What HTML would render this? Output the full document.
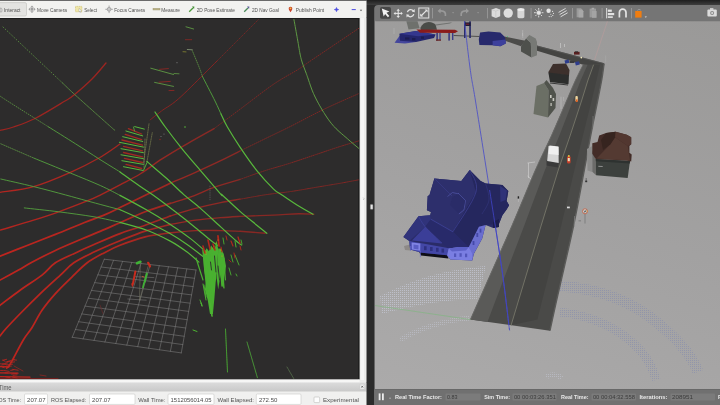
<!DOCTYPE html>
<html lang="en"><head><meta charset="utf-8"><title>RViz and Gazebo</title>
<style>
html,body{margin:0;padding:0;background:#2b2b2b;overflow:hidden}
body{width:720px;height:405px;position:relative;font-family:"Liberation Sans",sans-serif}
#stage{position:absolute;left:0;top:0;width:720px;height:405px;display:block;will-change:transform}
text{font-family:"Liberation Sans",sans-serif}
</style></head><body>
<svg id="stage" width="720" height="405" viewBox="0 0 720 405">
<defs><linearGradient id="tb" x1="0" y1="0" x2="0" y2="1"><stop offset="0" stop-color="#1e1e1e"/><stop offset="1" stop-color="#3e3e3e"/></linearGradient></defs>
<rect x="0" y="0" width="720" height="405" fill="#2b2b2b"/>
<rect x="366" y="0" width="354" height="5" fill="url(#tb)"/>
<g id="rviz-chrome">
<rect x="0" y="0" width="366.3" height="405" fill="#efefee"/>
<rect x="0" y="0" width="366.3" height="0.9" fill="#4a4a4a"/>
<rect x="0" y="0.9" width="366.3" height="16.6" fill="#f2f2f0"/>
<rect x="359" y="18" width="7.3" height="364" fill="#ececeb"/>
<rect x="360.6" y="18" width="3.4" height="362" fill="#f6f6f6"/>
<path d="M363.2 197.6l1 1.2-1 1.2" fill="none" stroke="#999" stroke-width="0.5"/>
</g>
<g id="gazebo-chrome">
<path d="M374.2 405V9Q374.2 5 378.2 5H720V405Z" fill="#757575"/>
<rect x="370.4" y="204.4" width="2.5" height="4.9" rx="0.5" fill="#e6e6e6" stroke="#888" stroke-width="0.4"/>
</g>
<g id="rviz-view">
<rect x="0" y="18" width="359.6" height="361.5" fill="#1a1a1a"/><rect x="0" y="18" width="358.3" height="361.2" fill="#2d2c2c"/>
<rect x="0" y="18" width="359" height="1" fill="#1c1c1c"/>
<clipPath id="cl"><rect x="0" y="19" width="359" height="360"/></clipPath>
<linearGradient id="rg" gradientUnits="userSpaceOnUse" x1="0" y1="0" x2="250" y2="0"><stop offset="0" stop-color="#c0241e"/><stop offset="0.45" stop-color="#b2261f"/><stop offset="0.75" stop-color="#962823"/><stop offset="1" stop-color="#862925"/></linearGradient>
<g clip-path="url(#cl)" stroke-linecap="round">
<path d="M104.3 259.2L72.2 337.3M104.3 259.2L196.0 270.0M113.5 260.3L83.1 338.9M101.1 267.0L194.5 278.3M122.6 261.4L94.0 340.4M97.9 274.8L193.1 286.6M131.8 262.4L104.9 342.0M94.7 282.6L191.6 294.9M141.0 263.5L115.8 343.5M91.5 290.4L190.1 303.2M150.2 264.6L126.8 345.1M88.2 298.2L188.7 311.4M159.3 265.7L137.7 346.7M85.0 306.1L187.2 319.7M168.5 266.8L148.6 348.2M81.8 313.9L185.7 328.0M177.7 267.8L159.5 349.8M78.6 321.7L184.2 336.3M186.8 268.9L170.4 351.3M75.4 329.5L182.8 344.6M196.0 270.0L181.3 352.9M72.2 337.3L181.3 352.9" fill="none" stroke="#808080" stroke-width="0.55"/>
<path d="M106.0 63.0C103.7 65.7 97.3 73.7 92.0 79.0C86.7 84.3 78.5 91.3 74.0 95.0C69.5 98.7 71.5 97.1 65.0 101.0C58.5 104.9 43.6 114.2 35.0 118.5C26.4 122.8 19.2 125.0 13.4 127.0C7.6 129.0 2.2 129.8 0.0 130.4" fill="none" stroke="#9c2521" stroke-width="1.3"/>
<path d="M120.0 144.0C116.5 146.3 107.2 153.3 99.0 158.0C90.8 162.7 81.4 167.5 70.5 172.3C59.6 177.1 45.4 183.2 33.6 186.6C21.9 189.9 5.6 191.4 0.0 192.4" fill="none" stroke="url(#rg)" stroke-width="1.3" stroke-opacity="0.9"/>
<path d="M0.0 230.2C5.6 228.5 23.8 223.3 33.6 220.2C43.4 217.1 49.8 215.0 58.7 211.8C67.6 208.6 80.2 203.7 87.2 200.9C94.2 198.1 95.2 197.5 100.7 194.8C106.2 192.1 113.4 188.4 120.0 184.9C126.6 181.4 133.1 178.3 140.1 174.0C147.1 169.7 154.2 163.9 162.0 158.9C169.8 153.9 178.4 148.8 187.1 143.8C195.8 138.8 209.5 131.2 214.0 128.7" fill="none" stroke="url(#rg)" stroke-width="1.4" stroke-opacity="0.92"/>
<path d="M214.0 128.7C218.3 125.5 230.1 116.7 240.0 109.3C249.9 101.9 263.8 90.9 273.6 84.2C283.4 77.5 292.3 73.2 298.7 69.1C305.1 65.0 301.9 66.7 312.1 59.8C322.3 52.9 352.0 32.9 360.0 27.5" fill="none" stroke="#842724" stroke-width="0.9" stroke-dasharray="0.9 1.5"/>
<path d="M0.0 256.2C4.2 254.5 16.0 249.8 25.2 246.2C34.4 242.6 45.6 238.3 55.4 234.4C65.2 230.5 75.8 225.9 83.9 222.7C92.0 219.5 98.0 217.6 104.0 215.1C110.0 212.6 112.9 211.0 120.0 207.6C127.1 204.2 138.4 198.7 146.8 194.6C155.2 190.5 166.4 185.1 170.3 183.2" fill="none" stroke="url(#rg)" stroke-width="1.7"/>
<path d="M170.3 183.2C174.5 181.4 187.1 176.1 195.5 172.3C203.9 168.5 213.3 164.2 220.7 160.6C228.1 157.0 236.8 152.6 240.0 151.0" fill="none" stroke="url(#rg)" stroke-width="1.35"/>
<path d="M240.0 151.0C244.2 148.9 256.8 142.8 265.2 138.7C273.6 134.6 280.5 131.4 290.3 126.5C300.1 121.6 312.7 114.7 323.9 109.3C335.1 103.9 351.4 96.9 357.4 94.2C363.4 91.5 359.6 93.2 360.0 93.0" fill="none" stroke="#842724" stroke-width="0.9" stroke-dasharray="0.9 1.3"/>
<path d="M0.0 280.1C3.1 278.4 13.3 272.9 18.5 270.0C23.7 267.1 24.9 266.1 31.0 262.8C37.1 259.5 47.1 254.3 55.4 250.4C63.6 246.5 73.0 242.7 80.5 239.5C88.0 236.3 94.1 233.9 100.7 231.1C107.3 228.3 112.6 225.9 120.0 222.7C127.4 219.5 136.8 215.0 145.2 211.8C153.6 208.6 166.1 204.8 170.3 203.4" fill="none" stroke="url(#rg)" stroke-width="1.7"/>
<path d="M170.3 203.4C174.2 202.1 186.5 198.5 193.8 195.8C201.1 193.1 206.3 190.1 214.0 187.4C221.7 184.7 235.7 180.7 240.0 179.4" fill="none" stroke="url(#rg)" stroke-width="1.35"/>
<path d="M240.0 179.4C244.2 177.9 256.8 173.3 265.2 170.6C273.6 167.9 281.9 165.8 290.3 163.1C298.7 160.4 307.1 157.5 315.5 154.7C323.9 151.9 333.7 148.5 340.7 146.3C347.7 144.1 354.2 142.3 357.4 141.3C360.6 140.3 359.6 140.6 360.0 140.5" fill="none" stroke="#842724" stroke-width="1.0" stroke-dasharray="1.1 1.1"/>
<path d="M0.0 305.3C3.4 302.8 13.1 295.2 20.1 290.2C27.1 285.2 36.1 279.7 42.0 275.1C47.9 270.5 49.8 266.5 55.4 262.8C61.0 259.1 69.1 256.0 75.5 252.9C81.9 249.8 86.6 247.7 94.0 244.5C101.4 241.3 111.5 236.8 120.0 233.6C128.5 230.4 136.8 228.1 145.2 225.2C153.6 222.3 166.1 217.5 170.3 216.0" fill="none" stroke="url(#rg)" stroke-width="1.7"/>
<path d="M170.3 216.0C174.5 214.7 187.1 210.6 195.5 208.4C203.9 206.2 213.3 204.1 220.7 202.6C228.1 201.1 236.8 199.8 240.0 199.2" fill="none" stroke="url(#rg)" stroke-width="1.35"/>
<path d="M240.0 199.2C244.2 198.5 256.8 196.1 265.2 194.8C273.6 193.5 281.9 192.8 290.3 191.6C298.7 190.4 307.1 188.8 315.5 187.4C323.9 186.0 333.6 184.4 340.7 183.2C347.8 181.9 355.4 180.4 358.3 179.9" fill="none" stroke="#842724" stroke-width="1.0" stroke-dasharray="1.3 0.9"/>
<path d="M0.0 336.0C1.1 334.6 3.1 331.8 6.7 327.8C10.3 323.8 16.2 317.7 21.8 312.0C27.4 306.3 33.9 299.8 40.3 293.6C46.7 287.5 54.8 280.2 60.4 275.1C66.0 270.0 68.2 266.7 73.8 262.8C79.4 258.9 88.1 254.9 94.0 252.0C99.9 249.1 104.7 247.2 109.0 245.3C113.3 243.4 114.0 243.1 120.0 240.7C126.0 238.3 136.8 233.8 145.2 231.1C153.6 228.4 166.1 225.5 170.3 224.4" fill="none" stroke="url(#rg)" stroke-width="1.7"/>
<path d="M170.3 224.4C174.5 223.7 187.1 221.3 195.5 220.2C203.9 219.1 213.3 218.3 220.7 217.7C228.1 217.1 236.8 216.6 240.0 216.4" fill="none" stroke="url(#rg)" stroke-width="1.35"/>
<path d="M240.0 216.4C245.6 216.2 263.8 215.5 273.6 215.1C283.4 214.7 292.0 213.9 298.7 213.8C305.4 213.7 311.3 214.2 313.8 214.3" fill="none" stroke="#872824" stroke-width="1.4"/>
<path d="M6.7 368.0C7.2 367.4 7.2 369.1 10.0 364.4C12.8 359.7 19.7 346.1 23.3 340.0C26.9 333.9 28.8 332.8 31.9 327.8C35.0 322.9 38.1 316.0 42.0 310.3C45.9 304.6 50.4 299.2 55.4 293.6C60.4 288.0 66.8 281.9 72.1 276.8C77.4 271.7 81.9 266.8 87.2 262.8C92.5 258.8 98.5 255.8 104.0 252.9C109.5 250.0 113.1 248.0 120.0 245.3C126.9 242.6 136.8 239.0 145.2 236.9C153.6 234.8 166.1 233.5 170.3 232.8" fill="none" stroke="url(#rg)" stroke-width="1.7"/>
<path d="M170.3 232.8C174.5 232.4 187.1 231.0 195.5 230.6C203.9 230.2 213.3 230.5 220.7 230.6C228.1 230.7 236.8 231.2 240.0 231.3" fill="none" stroke="url(#rg)" stroke-width="1.35"/>
<path d="M240.0 231.3L265.2 233.3" fill="none" stroke="#872824" stroke-width="1.4"/>
<path d="M260.0 18.0L217.0 61.0" fill="none" stroke="#842724" stroke-width="0.8" stroke-dasharray="0.8 1.6"/>
<path d="M217.0 61.0C210.8 67.1 189.2 89.2 180.0 97.5C170.8 105.8 166.5 107.2 161.5 111.0C156.5 114.8 151.9 118.5 150.0 120.0" fill="none" stroke="#8c2422" stroke-width="0.95" stroke-dasharray="1.3 0.7"/>
<path d="M3.3 360.1l3.3 -0.8M0.9 366.0l5.6 0.7M10.7 362.4l3.9 -0.5M2.4 360.1l2.5 1.0M11.6 374.1l5.1 -0.7M4.3 370.5l4.8 0.9M12.3 359.7l4.2 0.4M7.1 361.6l3.6 -1.0M13.1 375.3l4.0 -0.5M12.7 369.4l5.5 0.8M7.1 366.3l4.2 -0.2M2.3 364.1l5.2 -1.1M0.6 370.5l2.8 0.1M6.6 364.9l6.0 -0.7M5.8 362.1l4.3 -0.5M5.0 372.9l2.9 0.1M12.7 360.0l1.8 -0.7M10.7 370.3l2.6 -0.4M2.5 367.2l1.7 0.5M12.5 377.1l4.8 1.1M0.3 363.8l5.8 0.7M5.7 376.9l4.3 0.8" fill="none" stroke="url(#rg)" stroke-width="1.0" stroke-opacity="0.8"/>
<line x1="0.0" y1="366.7" x2="9.0" y2="367.0" stroke="url(#rg)" stroke-width="1.2"/>
<line x1="0.0" y1="372.8" x2="18.0" y2="373.2" stroke="url(#rg)" stroke-width="1.2"/>
<line x1="0.0" y1="376.7" x2="30.0" y2="377.2" stroke="url(#rg)" stroke-width="1.2"/>
<line x1="0.0" y1="378.7" x2="58.0" y2="378.7" stroke="#8a1a16" stroke-width="0.9"/>
<line x1="14.0" y1="366.0" x2="23.0" y2="371.0" stroke="#842724" stroke-width="0.9"/>
<line x1="40.0" y1="375.0" x2="46.0" y2="376.0" stroke="#842724" stroke-width="0.9"/>
<path d="M3.0 27.0L62.0 82.5" fill="none" stroke="#5f9a44" stroke-width="0.8" stroke-dasharray="0.8 2.2"/>
<path d="M62.0 82.5C64.2 84.5 66.8 87.3 75.0 94.8C83.2 102.2 104.5 121.2 111.0 127.0C117.5 132.8 113.5 129.1 114.0 129.5" fill="none" stroke="#5f9a44" stroke-width="0.8" stroke-dasharray="1.1 0.9"/>
<path d="M0.0 96.0C1.2 96.8 -0.6 95.8 7.5 101.0C15.6 106.2 41.8 122.7 48.7 127.0" fill="none" stroke="#5f9a44" stroke-width="0.8" stroke-dasharray="0.8 1.6"/>
<path d="M48.7 127.0C53.2 129.8 67.1 138.5 75.5 143.8C83.9 149.1 91.6 154.2 99.0 158.9C106.4 163.6 116.5 169.7 120.0 171.9" fill="none" stroke="#55a23e" stroke-width="0.9"/>
<path d="M120.0 171.9C122.8 173.9 131.4 180.2 136.8 184.0C142.2 187.8 145.9 190.0 152.3 194.6C158.7 199.2 168.2 206.3 175.4 211.8C182.6 217.3 189.6 222.9 195.5 227.7C201.4 232.4 207.0 237.4 210.6 240.3C214.2 243.2 216.2 244.5 217.3 245.3" fill="none" stroke="#58b83c" stroke-width="1.2"/>
<path d="M0.8 143.8L33.6 158.0" fill="none" stroke="#5f9a44" stroke-width="0.8" stroke-dasharray="0.8 1.2"/>
<path d="M33.6 158.0C39.8 160.5 59.3 168.5 70.5 173.1C81.7 177.7 92.5 182.0 100.7 185.7C109.0 189.4 116.8 193.8 120.0 195.4" fill="none" stroke="#55a23e" stroke-width="0.9"/>
<path d="M120.0 195.4C124.5 197.8 138.4 205.3 146.8 210.1C155.2 214.9 163.0 219.7 170.3 224.4C177.6 229.2 184.3 233.8 190.5 238.6C196.7 243.3 204.4 250.5 207.2 252.9" fill="none" stroke="#58b83c" stroke-width="1.2"/>
<path d="M0.8 179.0C6.3 180.3 22.8 183.9 33.6 186.6C44.4 189.2 56.5 192.5 65.4 194.9C74.3 197.3 78.1 198.4 87.2 200.9C96.3 203.4 114.5 208.2 120.0 209.7" fill="none" stroke="#55a23e" stroke-width="0.9"/>
<path d="M120.0 209.7C124.5 211.7 138.7 218.0 146.8 221.8C154.9 225.7 162.0 229.0 168.7 232.8C175.4 236.6 181.2 240.4 187.1 244.5C193.0 248.6 201.1 255.0 203.9 257.1" fill="none" stroke="#58b83c" stroke-width="1.2"/>
<path d="M24.3 207.9C30.0 208.6 47.1 210.3 58.7 211.8C70.3 213.3 83.8 215.1 94.0 216.8C104.2 218.6 115.7 221.4 120.0 222.3" fill="none" stroke="#55a23e" stroke-width="0.9"/>
<path d="M120.0 222.3C124.5 223.6 138.4 227.1 146.8 230.2C155.2 233.3 163.6 237.5 170.3 241.1C177.0 244.7 182.3 248.5 187.1 252.0C191.9 255.5 196.9 260.4 198.9 262.1" fill="none" stroke="#58b83c" stroke-width="1.2"/>
<path d="M293.8 18.8C294.5 22.6 296.8 35.3 298.0 42.0C299.2 48.7 299.7 53.4 301.2 59.0C302.7 64.6 305.0 69.9 307.1 75.8C309.2 81.7 311.0 88.0 313.8 94.2C316.6 100.4 320.5 107.3 323.9 112.7C327.3 118.1 330.1 122.2 334.0 126.5C337.9 130.8 343.3 135.1 347.4 138.7C351.4 142.3 356.2 146.2 358.3 148.0C360.4 149.8 359.7 149.2 360.0 149.5" fill="none" stroke="#5f9a44" stroke-width="1.0" stroke-dasharray="1.8 0.6"/>
<path d="M192.3 50.7C193.5 53.5 197.6 63.4 199.3 67.7C201.0 72.0 201.9 75.0 202.4 76.4" fill="none" stroke="#5f9a44" stroke-width="0.8" stroke-dasharray="0.8 1.3"/>
<path d="M202.4 76.4C204.5 80.5 211.9 94.7 215.0 101.0C218.1 107.3 220.0 111.8 221.0 114.0" fill="none" stroke="#4f9a3c" stroke-width="1.0"/>
<path d="M221.0 114.0C222.1 116.2 224.2 121.5 227.4 127.0C230.6 132.5 235.1 139.8 240.0 147.1C244.9 154.4 251.2 163.6 256.8 170.6C262.4 177.6 269.4 185.0 273.6 189.1C277.8 193.2 278.1 192.3 282.0 195.0C285.9 197.7 291.8 201.8 297.0 205.0C302.2 208.2 310.3 212.8 313.0 214.3" fill="none" stroke="#58b83c" stroke-width="1.2"/>
<path d="M155.0 112.0C156.7 114.5 160.8 120.9 165.3 127.0C169.8 133.1 176.2 141.5 182.1 148.8C188.0 156.1 194.1 163.1 200.5 170.6C206.9 178.1 217.1 190.0 220.7 194.1C224.3 198.2 219.1 192.1 222.3 195.0C225.5 197.9 234.2 206.4 240.0 211.4C245.8 216.4 252.3 221.5 256.8 225.2C261.3 228.8 265.1 232.0 266.8 233.3" fill="none" stroke="#58b83c" stroke-width="1.2"/>
<path d="M146.8 161.4C149.9 164.1 159.1 171.8 165.3 177.3C171.5 182.8 177.9 189.4 183.8 194.6C189.7 199.8 194.3 203.0 200.5 208.4C206.7 213.8 214.5 221.3 220.7 226.9C226.8 232.5 233.9 239.0 237.4 242.0C240.9 245.0 241.0 244.5 241.7 245.0" fill="none" stroke="#58b83c" stroke-width="1.2"/>
<line x1="186.0" y1="26.8" x2="193.6" y2="29.0" stroke="#5f9a44" stroke-width="0.9"/>
<line x1="185.4" y1="39.7" x2="191.7" y2="39.7" stroke="#842724" stroke-width="0.9"/>
<line x1="187.3" y1="49.5" x2="192.3" y2="49.8" stroke="#7f8f70" stroke-width="0.9"/>
<line x1="183.0" y1="51.7" x2="186.0" y2="51.9" stroke="#7d7d30" stroke-width="0.9"/>
<circle cx="177" cy="62.7" r="0.6" fill="#777"/>
<circle cx="185" cy="127" r="0.8" fill="#58b83c"/>
<line x1="150.8" y1="68.2" x2="173.5" y2="74.5" stroke="#5f9a44" stroke-width="0.9"/>
<line x1="174.0" y1="73.5" x2="179.0" y2="73.8" stroke="#5f9a44" stroke-width="0.8"/>
<line x1="159.6" y1="69.3" x2="168.4" y2="68.6" stroke="#842724" stroke-width="1.0"/>
<line x1="154.6" y1="82.4" x2="173.5" y2="86.4" stroke="#5f9a44" stroke-width="0.9"/>
<line x1="159.0" y1="82.2" x2="170.3" y2="81.4" stroke="#842724" stroke-width="1.0"/>
<line x1="169.0" y1="90.6" x2="174.0" y2="90.4" stroke="#842724" stroke-width="1.0"/>
<line x1="134.7" y1="126.6" x2="144.3" y2="129.1" stroke="#58b83c" stroke-width="1.0"/>
<line x1="128.4" y1="128.7" x2="141.7" y2="134.0" stroke="#a02a22" stroke-width="1.3"/>
<line x1="125.9" y1="131.0" x2="142.7" y2="135.9" stroke="#58b83c" stroke-width="1.0"/>
<line x1="125.2" y1="134.4" x2="141.7" y2="139.6" stroke="#a02a22" stroke-width="1.3"/>
<line x1="122.7" y1="136.7" x2="142.7" y2="141.5" stroke="#58b83c" stroke-width="1.0"/>
<line x1="121.9" y1="140.0" x2="142.5" y2="145.2" stroke="#a02a22" stroke-width="1.3"/>
<line x1="119.4" y1="142.3" x2="143.5" y2="147.1" stroke="#58b83c" stroke-width="1.0"/>
<line x1="123.5" y1="146.4" x2="142.5" y2="150.8" stroke="#a02a22" stroke-width="1.3"/>
<line x1="121.0" y1="148.7" x2="143.5" y2="152.7" stroke="#58b83c" stroke-width="1.0"/>
<line x1="123.5" y1="152.5" x2="142.5" y2="156.8" stroke="#a02a22" stroke-width="1.3"/>
<line x1="121.0" y1="154.8" x2="143.5" y2="158.7" stroke="#58b83c" stroke-width="1.0"/>
<line x1="124.4" y1="158.4" x2="142.5" y2="162.5" stroke="#a02a22" stroke-width="1.3"/>
<line x1="121.9" y1="160.7" x2="143.5" y2="164.4" stroke="#58b83c" stroke-width="1.0"/>
<line x1="126.0" y1="164.4" x2="141.7" y2="168.5" stroke="#a02a22" stroke-width="1.3"/>
<line x1="123.5" y1="166.7" x2="142.7" y2="170.4" stroke="#58b83c" stroke-width="1.0"/>
<line x1="149.0" y1="123.8" x2="143.5" y2="163.0" stroke="#747a4c" stroke-width="0.75" stroke-dasharray="0.7 1.0"/>
<line x1="152.3" y1="132.7" x2="147.0" y2="161.5" stroke="#747a4c" stroke-width="0.75" stroke-dasharray="0.7 1.0"/>
<line x1="145.0" y1="139.0" x2="144.0" y2="168.0" stroke="#747a4c" stroke-width="0.75" stroke-dasharray="0.7 1.0"/>
<line x1="143.5" y1="170.4" x2="147.5" y2="161.5" stroke="#58b83c" stroke-width="0.9"/>
<line x1="133.5" y1="127.0" x2="134.5" y2="131.0" stroke="#58b83c" stroke-width="0.8"/>
<circle cx="161" cy="136.5" r="0.6" fill="#777"/><circle cx="164" cy="134" r="0.6" fill="#777"/><circle cx="160" cy="139.5" r="0.7" fill="#8e2622"/>
<line x1="210.0" y1="186.0" x2="210.0" y2="201.0" stroke="#777" stroke-width="0.5" stroke-dasharray="0.6 1.6"/>
<polygon points="203.3,253.4 206.7,248.3 208.9,251.2 211.1,245.4 214.4,249.9 216.7,240.6 218.2,249.4 217.3,269.4 215.6,282.8 214.4,298.3 212.9,313.9 210.0,313.9 207.8,300.6 204.9,289.4 206.2,281.7 204.0,269.4" fill="#49b030"/>
<polygon points="218.2,249.4 221.1,248.3 223.8,253.9 226.0,266.1 224.4,277.2 223.6,288.3 221.8,285.0 221.1,273.9 219.6,280.6 218.2,289.4 216.7,278.3 217.3,269.4" fill="#49b030"/>
<line x1="196.0" y1="258.0" x2="203.0" y2="280.0" stroke="#49b030" stroke-width="1.2"/>
<line x1="203.0" y1="250.0" x2="207.0" y2="290.0" stroke="#49b030" stroke-width="1.6"/>
<line x1="206.0" y1="262.0" x2="210.0" y2="300.0" stroke="#49b030" stroke-width="2.4"/>
<line x1="209.0" y1="280.0" x2="212.0" y2="311.0" stroke="#49b030" stroke-width="2.0"/>
<line x1="211.0" y1="250.0" x2="214.0" y2="285.0" stroke="#49b030" stroke-width="1.4"/>
<line x1="219.0" y1="249.0" x2="222.0" y2="286.0" stroke="#49b030" stroke-width="1.4"/>
<line x1="222.0" y1="262.0" x2="224.0" y2="288.0" stroke="#49b030" stroke-width="1.2"/>
<line x1="224.0" y1="258.0" x2="225.5" y2="280.0" stroke="#49b030" stroke-width="1.0"/>
<line x1="203.0" y1="284.0" x2="206.0" y2="300.0" stroke="#49b030" stroke-width="1.0"/>
<line x1="200.0" y1="300.0" x2="202.0" y2="305.0" stroke="#49b030" stroke-width="1.0"/>
<line x1="231.0" y1="255.0" x2="233.0" y2="262.0" stroke="#49b030" stroke-width="0.9"/>
<line x1="235.0" y1="255.0" x2="239.0" y2="265.0" stroke="#49b030" stroke-width="0.9"/>
<line x1="229.0" y1="268.0" x2="231.0" y2="275.0" stroke="#49b030" stroke-width="0.9"/>
<line x1="223.0" y1="238.0" x2="224.0" y2="244.0" stroke="#49b030" stroke-width="0.9"/>
<line x1="235.0" y1="241.0" x2="236.0" y2="247.0" stroke="#49b030" stroke-width="1.0"/>
<line x1="241.0" y1="240.0" x2="242.0" y2="244.0" stroke="#49b030" stroke-width="0.9"/>
<line x1="236.0" y1="274.0" x2="237.0" y2="276.0" stroke="#49b030" stroke-width="0.9"/>
<line x1="201.0" y1="303.0" x2="202.0" y2="306.0" stroke="#49b030" stroke-width="1.0"/>
<line x1="204.0" y1="285.0" x2="206.0" y2="297.0" stroke="#49b030" stroke-width="0.9"/>
<line x1="214.5" y1="256.0" x2="216.0" y2="272.0" stroke="#2d2c2c" stroke-width="0.9"/>
<line x1="218.0" y1="266.0" x2="219.5" y2="280.0" stroke="#2d2c2c" stroke-width="0.9"/>
<line x1="210.5" y1="262.0" x2="211.5" y2="270.0" stroke="#2d2c2c" stroke-width="0.9"/>
<line x1="203.0" y1="246.0" x2="205.0" y2="253.0" stroke="#b0281c" stroke-width="1.6"/>
<line x1="208.0" y1="240.0" x2="210.0" y2="249.0" stroke="#b0281c" stroke-width="1.6"/>
<line x1="213.0" y1="244.0" x2="215.0" y2="250.0" stroke="#b0281c" stroke-width="1.4"/>
<line x1="218.0" y1="236.0" x2="219.0" y2="246.0" stroke="#b0281c" stroke-width="1.8"/>
<line x1="221.0" y1="247.0" x2="222.0" y2="252.0" stroke="#b0281c" stroke-width="1.2"/>
<line x1="226.0" y1="236.0" x2="227.0" y2="240.0" stroke="#b0281c" stroke-width="1.0"/>
<line x1="231.0" y1="241.0" x2="233.0" y2="246.0" stroke="#b0281c" stroke-width="1.2"/>
<line x1="238.0" y1="237.0" x2="240.0" y2="243.0" stroke="#b0281c" stroke-width="1.3"/>
<line x1="240.0" y1="246.0" x2="241.0" y2="250.0" stroke="#b0281c" stroke-width="1.0"/>
<line x1="234.0" y1="253.0" x2="235.0" y2="258.0" stroke="#b0281c" stroke-width="1.0"/>
<line x1="229.0" y1="260.0" x2="231.0" y2="262.0" stroke="#b0281c" stroke-width="0.9"/>
<circle cx="206" cy="252" r="0.5" fill="#e89a10"/>
<circle cx="213" cy="248" r="0.5" fill="#e89a10"/>
<circle cx="216" cy="243" r="0.5" fill="#e89a10"/>
<circle cx="218" cy="240" r="0.5" fill="#e89a10"/>
<circle cx="221" cy="250" r="0.5" fill="#e89a10"/>
<circle cx="222" cy="256" r="0.5" fill="#e89a10"/>
<circle cx="206" cy="254" r="0.5" fill="#e89a10"/>
<circle cx="214" cy="246" r="0.5" fill="#e89a10"/>
<line x1="225.5" y1="329.0" x2="227.5" y2="372.0" stroke="#48a832" stroke-width="0.9" stroke-dasharray="1.4 0.5"/>
<line x1="247.0" y1="342.0" x2="257.5" y2="378.0" stroke="#4a9a38" stroke-width="0.9" stroke-dasharray="1.2 0.6"/>
<line x1="287.0" y1="367.0" x2="294.0" y2="379.0" stroke="#5b7a50" stroke-width="0.7" stroke-dasharray="0.9 0.8"/>
<line x1="193.0" y1="330.0" x2="197.0" y2="331.5" stroke="#4db432" stroke-width="1.0"/>
<line x1="201.0" y1="303.0" x2="202.0" y2="306.0" stroke="#4db432" stroke-width="1.0"/>
<path d="M210.0 303.0C210.2 303.8 210.7 305.8 211.0 308.0C211.3 310.2 211.8 314.7 212.0 316.0" fill="none" stroke="#4db432" stroke-width="1.6"/>
<line x1="140.3" y1="264.3" x2="139.5" y2="300.3" stroke="#6e6e5e" stroke-width="0.6"/>
<line x1="147.9" y1="266.8" x2="139.8" y2="300.3" stroke="#6e6e5e" stroke-width="0.6"/>
<line x1="134.5" y1="276.6" x2="153.8" y2="277.6" stroke="#8a8a8a" stroke-width="0.45"/>
<line x1="127.8" y1="299.0" x2="146.2" y2="300.2" stroke="#8a8a8a" stroke-width="0.45"/>
<line x1="135.4" y1="271.4" x2="132.8" y2="284.4" stroke="#c82c1e" stroke-width="2.0"/>
<line x1="132.0" y1="284.0" x2="132.6" y2="286.0" stroke="#c82c1e" stroke-width="1.4"/>
<line x1="137.0" y1="263.2" x2="140.4" y2="261.8" stroke="#3fb235" stroke-width="2.6"/>
<line x1="148.2" y1="262.8" x2="150.0" y2="266.4" stroke="#c82c1e" stroke-width="2.2"/>
<line x1="146.8" y1="273.6" x2="144.6" y2="282.0" stroke="#3fb235" stroke-width="2.0"/>
<line x1="144.0" y1="283.0" x2="143.0" y2="287.4" stroke="#3fb235" stroke-width="1.7"/>
<line x1="142.2" y1="276.5" x2="144.0" y2="277.0" stroke="#d86030" stroke-width="0.8"/>
<line x1="100.0" y1="305.0" x2="103.0" y2="313.6" stroke="#7a2a2a" stroke-width="0.5" stroke-dasharray="0.6 0.6"/>
</g></g>
<g id="gazebo-view">
<defs><linearGradient id="gnd" gradientUnits="userSpaceOnUse" x1="720" y1="21" x2="571" y2="456"><stop offset="0" stop-color="#9a9998"/><stop offset="0.5" stop-color="#a2a1a1"/><stop offset="1" stop-color="#abaaaa"/></linearGradient>
<clipPath id="cr"><rect x="375" y="21" width="345" height="368"/></clipPath></defs>
<rect x="375" y="20.6" width="345" height="368.4" fill="url(#gnd)"/>
<g clip-path="url(#cr)">
<defs><pattern id="dt1" width="2" height="2" patternUnits="userSpaceOnUse"><rect x="0" y="0" width="1" height="1" fill="#c6c9d8"/></pattern><pattern id="dt2" width="2" height="2" patternUnits="userSpaceOnUse"><rect x="0" y="0" width="1" height="1" fill="#8088ae"/></pattern></defs>
<path d="M380 296Q430 270 486 266L478 299Q430 300 382 314Z" fill="url(#dt1)" opacity="0.7"/>
<path d="M400 340Q430 322 470 318" fill="none" stroke="url(#dt1)" stroke-width="5" opacity="0.5"/>
<path d="M560 286Q620 290 660 325Q690 350 698 372" fill="none" stroke="url(#dt2)" stroke-width="11" opacity="0.55"/>
<path d="M560 312Q610 318 640 350Q652 364 656 380" fill="none" stroke="url(#dt2)" stroke-width="9" opacity="0.55"/>
<path d="M546 377Q553 372 562 378" fill="none" stroke="url(#dt1)" stroke-width="5" opacity="0.5"/>
<polygon points="453.6,34.9 479.4,35.9 479.4,37.1 453.6,36.1" fill="#4f4f4d"/>
<polygon points="504.4,36.5 525.3,40.7 521.0,46.2 505.0,40.7" fill="#4c4c4a"/>
<polygon points="537.0,45.6 604.4,63.3 604.0,66.0 583.2,64.7 537.0,50.8" fill="#444442"/>
<line x1="537.0" y1="46.1" x2="604.0" y2="63.7" stroke="#5c5c5a" stroke-width="0.6"/>
<polygon points="583.2,64.7 575.6,80.0 566.5,101.0 551.3,136.0 535.4,170.0 511.8,226.0 470.4,319.6 550.0,330.7 556.0,303.0 573.5,226.0 584.3,170.0 590.6,136.0 597.6,101.0 601.7,80.0 604.0,64.0" fill="#4a4a48"/>
<polygon points="583.2,64.7 575.6,80.0 566.5,101.0 551.3,136.0 535.4,170.0 511.8,226.0 470.4,319.6 487.5,322.0 494.6,303.0 524.1,226.0 545.0,170.0 559.2,136.0 572.8,101.0 580.8,80.0 587.6,64.7" fill="#5a5a58"/>
<path d="M583.2 64.7C581.9 67.2 578.4 74.0 575.6 80.0C572.8 86.0 570.5 91.7 566.5 101.0C562.5 110.3 556.5 124.5 551.3 136.0C546.1 147.5 542.0 155.0 535.4 170.0C528.8 185.0 522.6 201.1 511.8 226.0C501.0 250.9 477.3 304.0 470.4 319.6" fill="none" stroke="#6a6a68" stroke-width="1.0"/>
<polygon points="593.6,64.7 588.0,80.0 581.5,101.0 570.0,136.0 558.3,170.0 541.0,226.0 511.1,325.2 537.4,319.6 541.5,303.0 561.1,226.0 574.4,170.0 582.8,136.0 591.5,101.0 596.5,80.0 600.0,64.7" fill="#434341"/>
<path d="M604.0 64.0C603.6 66.7 602.8 73.8 601.7 80.0C600.6 86.2 599.5 91.7 597.6 101.0C595.8 110.3 592.8 124.5 590.6 136.0C588.4 147.5 587.1 155.0 584.3 170.0C581.4 185.0 578.2 203.8 573.5 226.0C568.8 248.2 559.9 285.6 556.0 303.0C552.1 320.4 551.0 326.1 550.0 330.7" fill="none" stroke="#5a5a58" stroke-width="1.4"/>
<path d="M593.6 64.7L588.0 80.0L581.5 101.0L570.0 136.0L558.3 170.0L541.0 226.0L511.1 325.2" fill="none" stroke="#77776a" stroke-width="0.9"/>
<line x1="394.0" y1="28.0" x2="394.0" y2="34.0" stroke="#c4c4c4" stroke-width="0.35"/>
<polygon points="406.4,21.3 417.5,21.3 419.6,28.2 408.5,29.6" fill="#6e706c"/>
<path d="M420.3 28Q423 22 428.6 22Q434 22.5 435.6 24.7L437 29.8L421 30.2Z" fill="#4a4c48"/>
<polygon points="435.6,24.4 452.2,22.3 450.0,23.6 436.0,25.6" fill="#707270"/>
<polygon points="394.6,42.8 399.4,36.0 416.0,42.0 405.0,43.4" fill="#34379c" opacity="0.85"/>
<polygon points="399.4,33.8 416.0,31.0 435.6,34.4 434.0,37.9 416.0,42.0 400.0,40.7" fill="#24266c"/>
<polygon points="399.4,33.8 416.0,31.0 435.6,34.4 418.0,36.2" fill="#34378e"/>
<rect x="405" y="37.4" width="4.5" height="2.2" fill="#1c1d50"/><rect x="412" y="38" width="3.4" height="2.4" fill="#1c1d50"/><rect x="421" y="36.6" width="3" height="2.2" fill="#1c1d50"/>
<rect x="436.4" y="33" width="1.4" height="7.6" fill="#2c2e7a"/><rect x="439.4" y="33" width="1.2" height="7" fill="#3a3c8a"/><rect x="448.4" y="33" width="1.4" height="7.6" fill="#2c2e7a"/><rect x="452" y="33" width="1.4" height="7" fill="#3a3c8a"/><rect x="436" y="39.4" width="5" height="1.4" fill="#6a2a2a"/>
<polygon points="416.4,29.4 455.0,29.8 458.0,31.2 455.0,33.0 420.0,32.8" fill="#8a1b1b"/>
<rect x="464" y="21.2" width="1.5" height="16.8" fill="#2a2c6a"/><rect x="469.2" y="21.2" width="1.7" height="16.8" fill="#2a2c6a"/><rect x="464.6" y="22.4" width="6" height="3.6" fill="#1c1c34"/><rect x="466" y="23.6" width="3" height="1.2" fill="#7a2030"/>
<path d="M464.4 21.2C465.4 29.4 468.5 57.3 470.4 70.6C472.2 83.9 472.3 81.1 475.5 101.0C478.7 120.9 485.2 161.8 489.6 190.0C494.0 218.2 498.8 247.5 502.0 270.0C505.2 292.5 507.7 315.5 508.9 325.2C510.1 334.9 509.3 327.5 509.4 328.0" fill="none" stroke="#4a4ec8" stroke-width="0.85"/>
<polygon points="480.1,32.4 488.5,31.4 500.3,32.4 505.1,37.2 505.8,43.5 500.3,46.2 492.6,45.3 479.4,44.9 478.8,39.3" fill="#27296c"/>
<polygon points="492.6,41.0 505.5,39.5 505.8,43.5 500.3,46.2 492.6,45.3" fill="#3d409c"/>
<circle cx="507.5" cy="36.5" r="0.5" fill="#40c070"/>
<line x1="522.5" y1="33.0" x2="522.8" y2="38.0" stroke="#c8c8c8" stroke-width="0.4"/>
<polygon points="521.0,46.2 526.0,38.6 530.8,42.8 531.5,57.4 521.0,51.5" fill="#4e504c"/>
<polygon points="529.4,35.1 535.7,38.6 537.0,42.0 537.0,55.3 531.5,57.4 530.8,42.8 526.0,38.6" fill="#777975"/>
<line x1="522.7" y1="30.0" x2="522.7" y2="36.0" stroke="#ccc" stroke-width="0.4"/>
<line x1="560.5" y1="43.0" x2="560.5" y2="48.0" stroke="#ddd" stroke-width="0.5"/>
<line x1="564.5" y1="44.0" x2="564.5" y2="47.0" stroke="#ddd" stroke-width="0.5"/>
<line x1="605.7" y1="55.5" x2="605.7" y2="62.5" stroke="#aaa" stroke-width="0.6"/>
<line x1="607.5" y1="21.0" x2="594.5" y2="60.0" stroke="#bb9c9c" stroke-width="0.6"/>
<polygon points="548.4,72.0 553.0,64.0 566.0,63.5 569.5,70.0 569.0,75.5 549.0,73.6" fill="#3d302c"/>
<polygon points="548.4,72.5 569.0,75.0 568.5,84.2 550.0,82.0" fill="#2c2d2c"/>
<line x1="550.0" y1="83.0" x2="568.0" y2="85.0" stroke="#1e1e1e" stroke-width="0.8"/>
<polygon points="564.5,60.4 568.6,59.6 569.4,62.8 565.3,63.8" fill="#2e3c8c"/>
<polygon points="575.0,62.0 579.0,61.2 579.8,64.4 575.8,65.4" fill="#2e3c8c"/>
<rect x="569.5" y="61" width="5" height="2" fill="#3a3a3c"/>
<rect x="574" y="51.8" width="5.6" height="2.8" fill="#5a1e1e"/><rect x="575" y="51.4" width="3" height="1" fill="#2a2a2a"/>
<circle cx="581.3" cy="57.6" r="0.9" fill="#f4ecc0"/>
<polygon points="536.5,86.0 544.0,83.0 548.5,90.0 548.0,117.5 533.5,114.0" fill="#6b6f65"/>
<polygon points="544.0,83.0 546.5,80.0 553.0,88.0 556.0,94.0 555.5,108.0 548.0,117.5 548.5,90.0" fill="#50534c"/>
<rect x="550" y="95" width="1.6" height="3" fill="#c8c8c0"/><rect x="552.6" y="98" width="1.6" height="3" fill="#c8c8c0"/><rect x="550.4" y="103" width="1.4" height="3" fill="#b8b8b0"/>
<line x1="561.0" y1="96.7" x2="561.0" y2="109.0" stroke="#c4c4c4" stroke-width="0.5"/>
<line x1="563.5" y1="97.0" x2="563.8" y2="101.0" stroke="#c4c4c4" stroke-width="0.4"/>
<rect x="575.4" y="96" width="2.4" height="5.6" rx="1" fill="#f0d8a0"/><rect x="575.8" y="99.4" width="1.8" height="2.6" fill="#e06020"/>
<line x1="593.0" y1="116.0" x2="593.0" y2="128.0" stroke="#8a8a88" stroke-width="0.5"/>
<polygon points="546.5,160.0 558.5,162.0 558.0,167.5 546.5,165.5" fill="#3a3a3a"/>
<polygon points="548.5,146.0 558.5,147.0 558.7,163.0 547.2,161.0" fill="#d6d6d6"/>
<polygon points="549.5,145.5 558.5,146.5 558.6,155.0 548.6,154.0" fill="#f0f0f0"/>
<rect x="567" y="156" width="3.6" height="7.6" rx="1.5" fill="#c8402a"/><rect x="567.8" y="158" width="2" height="3.2" fill="#e8e2c0"/><circle cx="568.8" cy="156" r="1" fill="#e0c040"/>
<polygon points="587.0,149.0 592.3,146.0 592.3,172.0 587.5,170.5" fill="#8b8b8a"/>
<polygon points="592.3,150.0 595.7,158.9 596.1,175.3 592.3,171.8" fill="#6c6c6a"/>
<polygon points="595.7,158.9 630.0,161.1 627.7,177.9 596.1,175.3" fill="#3c403d"/>
<polygon points="595.7,158.9 630.0,161.1 629.8,163.4 595.8,161.2" fill="#2e3230"/>
<polygon points="599.2,135.6 606.1,133.0 615.6,131.8 626.8,134.7 631.2,137.3 631.2,144.2 629.4,145.9 629.4,152.8 631.7,154.6 631.2,161.5 626.8,160.6 595.7,158.9 592.3,153.7 592.3,143.3 597.5,142.1" fill="#432c27"/>
<polygon points="615.1,137.3 627.7,145.9 630.0,160.6 596.6,158.4 610.4,144.2" fill="#543a32"/>
<polygon points="606.1,133.0 615.6,131.8 615.1,137.3 610.4,144.2 603.0,150.0 601.0,140.0" fill="#36241f"/>
<polygon points="615.6,131.8 626.8,134.7 631.2,137.3 631.2,144.2 627.7,145.9 615.1,137.3" fill="#523730"/>
<line x1="598.3" y1="166.3" x2="602.7" y2="166.5" stroke="#c8c8c8" stroke-width="0.6"/>
<line x1="586.2" y1="178.0" x2="586.2" y2="182.0" stroke="#444" stroke-width="0.6"/>
<rect x="585.2" y="180.6" width="2" height="1.6" fill="#333"/>
<line x1="527.5" y1="163.0" x2="535.0" y2="162.0" stroke="#ddd" stroke-width="0.5"/>
<line x1="528.5" y1="163.0" x2="528.5" y2="178.0" stroke="#ddd" stroke-width="0.5"/>
<line x1="527.5" y1="176.0" x2="531.0" y2="179.0" stroke="#ddd" stroke-width="0.5"/>
<rect x="517.7" y="196.3" width="1.4" height="2.4" fill="#222"/>
<line x1="518.4" y1="198.6" x2="518.4" y2="202.0" stroke="#ccc" stroke-width="0.4"/>
<circle cx="585" cy="211.3" r="2.5" fill="#d8d8d8" stroke="#c05838" stroke-width="0.8"/><path d="M583.6 210.8l3 1.4M584 212.8l2.4-3" stroke="#333" stroke-width="0.6" fill="none"/><circle cx="587" cy="211" r="0.6" fill="#f0a020"/>
<line x1="585.0" y1="214.0" x2="585.0" y2="223.5" stroke="#6a6a6a" stroke-width="0.6"/>
<line x1="574.6" y1="216.0" x2="574.6" y2="227.0" stroke="#8c8c8c" stroke-width="0.6"/>
<rect x="567" y="206.6" width="2.8" height="1.7" fill="#dcdcdc"/><rect x="578.5" y="220.4" width="2.5" height="0.9" fill="#777"/>
<line x1="375.0" y1="305.5" x2="470.4" y2="319.6" stroke="#86b486" stroke-width="0.8"/>
<polygon points="404.0,246.0 410.0,244.5 410.5,250.5 405.0,250.0" fill="#8d8987"/>
<polygon points="419.0,251.5 447.0,254.6 448.5,258.6 421.0,255.6" fill="#0e0e16"/>
<polygon points="469.7,170.0 480.6,180.9 485.6,183.5 502.4,185.1 508.3,191.0 506.6,201.0 509.1,205.3 506.6,209.5 502.4,215.3 499.0,223.7 499.0,227.0 493.2,228.0 485.6,225.1 482.2,238.6 473.9,253.7 472.2,260.4 450.4,259.5 447.0,255.3 421.8,252.8 410.1,249.5 409.3,241.1 403.4,236.9 418.5,216.2 430.2,215.3 431.0,212.0 426.9,210.3 427.7,196.0 429.4,195.2 434.4,178.4 461.3,180.9" fill="#2a2c68"/>
<polygon points="434.4,178.4 461.3,180.9 469.7,170.0 476.0,192.0 452.9,231.8 431.0,219.3 430.2,215.3 431.0,212.0 426.9,210.3 427.7,196.0 429.4,195.2" fill="#2d2f6c"/>
<polygon points="469.7,170.0 480.6,180.9 485.6,183.5 502.4,185.1 508.3,191.0 506.6,201.0 509.1,205.3 506.6,209.5 502.4,215.3 499.0,223.7 485.6,225.1 478.9,226.8 468.8,247.0 452.9,231.8 476.0,192.0" fill="#25275e"/>
<polygon points="493.0,222.0 499.0,219.0 499.0,227.0 493.2,228.0" fill="#1c1e4c"/>
<polygon points="418.5,216.2 403.4,236.9 409.3,241.1 425.2,226.8 431.0,219.3 430.2,215.3" fill="#30337a"/>
<polygon points="425.2,226.8 431.0,219.3 452.9,231.8 468.8,247.0 458.8,247.0 448.7,248.6 442.0,243.0" fill="#282a6a"/>
<polygon points="425.2,226.8 412.0,240.4 442.0,243.6" fill="#3b3e98"/>
<polygon points="409.3,241.1 450.4,248.6 447.0,255.3 421.8,252.8 410.1,249.5" fill="#4347a6"/>
<polygon points="411.6,242.4 420.4,243.6 420.2,250.8 411.8,249.6" fill="#8084e4"/>
<polygon points="413.5,244.5 418.5,245.2 418.4,249.4 413.6,248.8" fill="#5a5ec4"/>
<rect x="424" y="246.2" width="2.6" height="4" fill="#2e3080"/>
<rect x="430" y="247" width="2.6" height="4" fill="#2e3080"/>
<rect x="436" y="247.8" width="2.6" height="4" fill="#2e3080"/>
<rect x="441.5" y="248.6" width="2.6" height="4" fill="#2e3080"/>
<polygon points="478.9,226.8 485.6,225.1 482.2,238.6 473.9,253.7 472.2,260.4 468.8,247.0" fill="#6a6ed0"/>
<polygon points="448.7,248.6 458.8,247.0 468.8,247.0 472.2,253.7 472.2,260.4 450.4,259.5 447.0,255.3" fill="#7a7ee2"/>
<polygon points="448.7,248.6 458.8,247.0 468.8,247.0 466.0,250.5 452.0,251.6" fill="#5c60c6"/>
<rect x="476.4" y="233" width="1.8" height="4" fill="#4448a8"/>
<rect x="479.6" y="228.6" width="1.8" height="4" fill="#4448a8"/>
<rect x="472.6" y="241" width="1.8" height="4" fill="#4448a8"/>
<rect x="454" y="253.4" width="2.2" height="3.6" fill="#5256ba"/>
<rect x="459.5" y="253.2" width="2.2" height="3.6" fill="#5256ba"/>
<rect x="465" y="253.6" width="2.2" height="3.6" fill="#5256ba"/>
<path d="M469.7 170.0C470.8 173.7 478.8 181.7 476.0 192.0C473.2 202.3 456.8 225.2 452.9 231.8" fill="none" stroke="#3c3f90" stroke-width="0.8"/>
<path d="M434.4 178.4L452.0 196.0" fill="none" stroke="#3a3d8c" stroke-width="0.6"/>
<path d="M447.5 196.5l5-4 6.5 1.5M458 193l7.5 7.5-1.6 9.5-5 4" fill="none" stroke="#5054a8" stroke-width="0.7"/>
<polygon points="452.5,197.0 458.5,194.0 465.0,201.0 463.5,209.0 458.0,213.0 450.0,205.0" fill="#2a2c68"/>
<path d="M431.0 219.3L452.9 231.8" fill="none" stroke="#4448a0" stroke-width="0.7"/>
<path d="M418.5 216.2C419.6 218.0 421.3 222.3 425.2 226.8C429.1 231.3 439.2 240.3 442.0 243.0" fill="none" stroke="#4246a0" stroke-width="0.6"/>
<path d="M485.6 183.5C486.2 186.2 489.6 194.9 489.0 200.0C488.4 205.1 483.2 211.7 482.0 214.0" fill="none" stroke="#34377e" stroke-width="0.6"/>
<line x1="420.4" y1="250.6" x2="420.4" y2="257.2" stroke="#6a6ed0" stroke-width="0.7"/>
<line x1="410.6" y1="246.0" x2="410.6" y2="251.0" stroke="#6a6ed0" stroke-width="0.6"/>
<polygon points="500.0,186.0 507.0,190.5 505.6,200.0 500.5,202.0" fill="#2f3278"/>
<path d="M489.6 190.0C491.7 203.3 498.8 247.5 502.0 270.0C505.2 292.5 507.8 316.0 508.9 325.2" fill="none" stroke="#3e42c4" stroke-width="0.85"/>
</g></g>
<g id="rviz-toolbar">
<rect x="-2" y="2.6" width="28.5" height="13.4" rx="1.5" fill="#e3e3e1" stroke="#c4c4c2" stroke-width="0.7"/>
<path d="M0 8.2q1.6-.6 2 .8v2.6q-1 .8-2 .2z" fill="#ddd" stroke="#888" stroke-width="0.5"/>
<text x="4.0" y="11.9" font-size="6.1" fill="#505050" textLength="16.5" lengthAdjust="spacingAndGlyphs">Interact</text>
<g fill="#a0a0a0"><path d="M32 5.6l1.8 1.8h-3.6zM32 13l1.8-1.8h-3.6zM28.4 9.3l1.8-1.8v3.6zM35.6 9.3l-1.8-1.8v3.6z"/><rect x="30.6" y="7.9" width="2.8" height="2.8"/></g>
<text x="37.0" y="11.9" font-size="6.1" fill="#505050" textLength="30.0" lengthAdjust="spacingAndGlyphs">Move Camera</text>
<rect x="75.5" y="6.4" width="6.4" height="5.4" fill="#efe6a8" stroke="#c8b860" stroke-width="0.6" stroke-dasharray="1 0.7"/><path d="M79 8.4l2.6 2.4-1.2.1.6 1.2-.6.3-.6-1.2-.8.8z" fill="#fff" stroke="#777" stroke-width="0.3"/>
<text x="84.2" y="11.9" font-size="6.1" fill="#505050" textLength="12.8" lengthAdjust="spacingAndGlyphs">Select</text>
<g stroke="#a2a2a2" fill="none"><circle cx="109.1" cy="9.3" r="1.9" stroke-width="0.9" fill="#c8c8c8"/><path d="M109.1 5.5v2M109.1 11.1v2M105.3 9.3h2M110.9 9.3h2" stroke-width="0.9"/></g>
<text x="114.2" y="11.9" font-size="6.1" fill="#505050" textLength="30.8" lengthAdjust="spacingAndGlyphs">Focus Camera</text>
<rect x="153" y="8.3" width="7" height="1.7" fill="#bdb486" stroke="#97906a" stroke-width="0.4"/>
<text x="161.3" y="11.9" font-size="6.1" fill="#505050" textLength="18.7" lengthAdjust="spacingAndGlyphs">Measure</text>
<path d="M189.2 11.8L193 8" stroke="#4a9a3a" stroke-width="1.3" fill="none"/><path d="M192 6.6l2.4-.2-.3 2.5z" fill="#3c8a2e"/>
<text x="196.7" y="11.9" font-size="6.1" fill="#505050" textLength="38.3" lengthAdjust="spacingAndGlyphs">2D Pose Estimate</text>
<path d="M244.2 11.8L248 8" stroke="#4a8a5a" stroke-width="1.3" fill="none"/><path d="M247 6.6l2.4-.2-.3 2.5z" fill="#5a5a9a"/>
<text x="252.0" y="11.9" font-size="6.1" fill="#505050" textLength="26.8" lengthAdjust="spacingAndGlyphs">2D Nav Goal</text>
<path d="M290.5 12.2q-2.4-3-1.6-4.6 1.6-1.8 3.2 0 .8 1.6-1.6 4.6z" fill="#c8402a"/><circle cx="290.5" cy="8.3" r="0.9" fill="#f0c040"/>
<text x="295.8" y="11.9" font-size="6.1" fill="#505050" textLength="28.4" lengthAdjust="spacingAndGlyphs">Publish Point</text>
<path d="M336.5 7.4l.6 1.6 1.7.6-1.7.6-.6 1.6-.6-1.6-1.7-.6 1.7-.6z" fill="#4c4ce0" stroke="#4c4ce0" stroke-width="0.5"/>
<path d="M351.7 9.6h4.1" stroke="#4c4ce0" stroke-width="1.0"/><path d="M359.8 9.8h2.4l-1.2 1.5z" fill="#555"/>
</g>
<g id="rviz-time">
<rect x="0" y="379.5" width="359.5" height="3" fill="#f6f6f5"/>
<defs><linearGradient id="th" x1="0" y1="0" x2="0" y2="1"><stop offset="0" stop-color="#dbdbdb"/><stop offset="1" stop-color="#c8c8c8"/></linearGradient></defs>
<rect x="0" y="382.5" width="366.3" height="9.2" fill="url(#th)"/>
<rect x="0" y="391.7" width="366.3" height="13.3" fill="#f0f0ef"/>
<rect x="359.7" y="384.2" width="5" height="5" rx="1" fill="#efefef" stroke="#bbb" stroke-width="0.4"/><path d="M361.3 385.8l1.8 1.8M363.1 385.8l-1.8 1.8" stroke="#444" stroke-width="0.7"/>
<text x="-1.2" y="389.5" font-size="6.6" fill="#5a5a5a" textLength="12.8" lengthAdjust="spacingAndGlyphs">Time</text>
<text x="-5.8" y="401.6" font-size="6.1" fill="#525252" textLength="27.0" lengthAdjust="spacingAndGlyphs">ROS Time:</text>
<rect x="24.5" y="394" width="23.0" height="10.4" rx="1" fill="#ffffff" stroke="#c9c9c7" stroke-width="0.6"/>
<text x="27.1" y="401.6" font-size="6.1" fill="#4a4a4a" textLength="18.5" lengthAdjust="spacingAndGlyphs">207.07</text>
<text x="51.0" y="401.6" font-size="6.1" fill="#525252" textLength="35.0" lengthAdjust="spacingAndGlyphs">ROS Elapsed:</text>
<rect x="89.5" y="394" width="45.5" height="10.4" rx="1" fill="#ffffff" stroke="#c9c9c7" stroke-width="0.6"/>
<text x="92.1" y="401.6" font-size="6.1" fill="#4a4a4a" textLength="18.5" lengthAdjust="spacingAndGlyphs">207.07</text>
<text x="138.2" y="401.6" font-size="6.1" fill="#525252" textLength="27.3" lengthAdjust="spacingAndGlyphs">Wall Time:</text>
<rect x="168.0" y="394" width="46.0" height="10.4" rx="1" fill="#ffffff" stroke="#c9c9c7" stroke-width="0.6"/>
<text x="170.6" y="401.6" font-size="6.1" fill="#4a4a4a" textLength="41.0" lengthAdjust="spacingAndGlyphs">1512056014.05</text>
<text x="217.5" y="401.6" font-size="6.1" fill="#525252" textLength="36.5" lengthAdjust="spacingAndGlyphs">Wall Elapsed:</text>
<rect x="256.3" y="394" width="44.7" height="10.4" rx="1" fill="#ffffff" stroke="#c9c9c7" stroke-width="0.6"/>
<text x="258.9" y="401.6" font-size="6.1" fill="#4a4a4a" textLength="18.5" lengthAdjust="spacingAndGlyphs">272.50</text>
<rect x="314" y="397" width="5.6" height="5.6" rx="0.8" fill="#fdfdfd" stroke="#bdbdbb" stroke-width="0.6"/>
<text x="323.0" y="401.6" font-size="6.1" fill="#525252" textLength="36.0" lengthAdjust="spacingAndGlyphs">Experimental</text>
</g>
<g id="gazebo-toolbar">
<rect x="375.4" y="20.4" width="345" height="0.8" fill="#6a6a6a"/>
<rect x="380" y="7" width="11" height="11.8" rx="1.8" fill="#474747"/>
<path d="M381.8 8.6l7.6 3-2.9 1.1 2.8 3.3-1.4 1.2-2.8-3.3-1.4 2.7z" fill="#f2f2f2"/>
<g fill="#e4e4e4"><path d="M398.2 8.8l1.7 1.9h-3.4zM398.2 18l1.7-1.9h-3.4zM393.6 13.4l1.9-1.7v3.4zM402.8 13.4l-1.9-1.7v3.4z"/><rect x="397.65" y="10.2" width="1.1" height="6.4"/><rect x="395" y="12.85" width="6.4" height="1.1"/></g>
<path d="M407.4 12.2a3.4 3.4 0 0 1 6-1.2M413.8 14.2a3.4 3.4 0 0 1-6 1.2" fill="none" stroke="#e4e4e4" stroke-width="1.25"/><path d="M414.6 9l.2 3.2-3-.6zM406.6 17.4l-.2-3.2 3 .6z" fill="#e4e4e4"/>
<rect x="418.8" y="8" width="10" height="10" fill="none" stroke="#e4e4e4" stroke-width="1"/><path d="M421 16l5.6-5.6" stroke="#e4e4e4" stroke-width="1.2"/><path d="M424.6 9.4h3v3zM420.2 13.6v3h3z" fill="#e4e4e4"/>
<rect x="432.3" y="8" width="0.7" height="10.4" fill="#a2a2a2"/>
<path d="M444.6 16q.6-4.4-4-4.2v1.7l-3-2.6 3-2.6v1.6q6.6-.2 5.6 6.1z" fill="#999"/>
<path d="M452 12.2h2.2l-1.1 1.2z" fill="#999"/>
<path d="M462 16q-.6-4.4 4-4.2v1.7l3-2.6-3-2.6v1.6q-6.6-.2-5.6 6.1z" fill="#999"/>
<path d="M477 12.2h2.2l-1.1 1.2z" fill="#999"/>
<rect x="487.0" y="8" width="0.7" height="10.4" fill="#a2a2a2"/>
<path d="M491.6 9.6l4.4-1.6 4.2 1.4v6.8l-4.4 1.8-4.2-1.8z" fill="#dcdcdc"/><path d="M491.6 9.6l4.2 1.5 4.4-1.7M495.8 11.1V18" stroke="#bdbdbd" stroke-width="0.5" fill="none"/>
<circle cx="508.2" cy="13.1" r="4.7" fill="#dedede"/>
<path d="M517.4 9.4v7.4a3.5 1.5 0 0 0 7 0V9.4z" fill="#d6d6d6"/><ellipse cx="520.9" cy="9.4" rx="3.5" ry="1.5" fill="#ececec"/>
<rect x="530.7" y="8" width="0.7" height="10.4" fill="#a2a2a2"/>
<g stroke="#e4e4e4" stroke-width="0.9" fill="none"><circle cx="538.7" cy="12.7" r="1.8" fill="#e4e4e4"/><path d="M538.7 8v1.8M538.7 15.6v1.8M534 12.7h1.8M541.6 12.7h1.8M535.4 9.4l1.3 1.3M540.7 14.7l1.3 1.3M535.4 16l1.3-1.3M540.7 10.7l1.3-1.3"/></g>
<g fill="#e4e4e4"><circle cx="548.6" cy="10.7" r="2.2"/><circle cx="552.6" cy="11.4" r="0.55"/><circle cx="553.4" cy="13.4" r="0.55"/><circle cx="552.8" cy="15.4" r="0.55"/><circle cx="551.2" cy="16.6" r="0.55"/><circle cx="549.2" cy="16.6" r="0.55"/><circle cx="550.8" cy="14.2" r="0.5"/></g>
<path d="M558.6 12.4l7-4M559.6 14.6l7-4M560.6 16.8l7-4" stroke="#e4e4e4" stroke-width="0.9"/>
<rect x="572.0" y="8" width="0.7" height="10.4" fill="#a2a2a2"/>
<path d="M576.6 8.2h4.4l2 2v7h-6.4z" fill="#9a9a9a"/><path d="M578.6 9.8h3.4l1.4 1.4v6.2h-4.8z" fill="#a8a8a8"/>
<path d="M589.6 8.6h6.4v8.8h-6.4z" fill="#9a9a9a"/><path d="M591.6 7.8h2.6v1.6h-2.6z" fill="#aaa"/><path d="M592 11h4.6v6.8H592z" fill="#a4a4a4"/>
<rect x="601.7" y="8" width="0.7" height="10.4" fill="#a2a2a2"/>
<g fill="#e4e4e4"><rect x="606.2" y="8" width="0.9" height="10.4"/><rect x="607.8" y="9.6" width="4" height="2.2"/><rect x="607.8" y="13" width="6.4" height="2.2"/><rect x="607.8" y="16.3" width="5" height="1.6"/></g>
<path d="M619.4 17.6v-5.2a3.3 3.3 0 0 1 6.6 0v5.2" fill="none" stroke="#e4e4e4" stroke-width="1.7"/>
<rect x="631.0" y="8" width="0.7" height="10.4" fill="#a2a2a2"/>
<rect x="635.2" y="11" width="6.4" height="6.6" fill="#f07d10"/><path d="M637.4 10.4q1.4-2 3.2-.4" stroke="#aaa" stroke-width="0.7" fill="none"/><path d="M644.6 16.4h2.4l-1.2 1.4z" fill="#ddd"/>
<rect x="707.4" y="9.4" width="9.4" height="7" rx="1" fill="#dcdcdc"/><rect x="710" y="8.2" width="3.4" height="1.6" fill="#dcdcdc"/><circle cx="712.1" cy="12.9" r="2" fill="#8a8a8a"/><circle cx="712.1" cy="12.9" r="1" fill="#dcdcdc"/>
</g>
<g id="gazebo-status">
<rect x="374.2" y="389" width="345.8" height="16" fill="#707070"/>
<rect x="374.2" y="389" width="345.8" height="0.9" fill="#686868"/>
<rect x="378.7" y="393.4" width="1.8" height="6.8" fill="#ececec"/><rect x="382" y="393.4" width="1.8" height="6.8" fill="#ececec"/>
<rect x="389.4" y="397.6" width="1.3" height="1.3" fill="#b0b0b0"/>
<text x="395.0" y="399.2" font-size="5.6" fill="#e8e8e8" textLength="47.0" lengthAdjust="spacingAndGlyphs" font-weight="bold">Real Time Factor:</text>
<rect x="445.5" y="393.6" width="35.0" height="7" rx="1" fill="#7b7b7b"/>
<text x="446.9" y="399.2" font-size="5.6" fill="#3c3c3c" textLength="10.5" lengthAdjust="spacingAndGlyphs">0.83</text>
<text x="484.2" y="399.2" font-size="5.6" fill="#e8e8e8" textLength="25.8" lengthAdjust="spacingAndGlyphs" font-weight="bold">Sim Time:</text>
<rect x="512.5" y="393.6" width="44.0" height="7" rx="1" fill="#7b7b7b"/>
<text x="513.9" y="399.2" font-size="5.6" fill="#3c3c3c" textLength="42.0" lengthAdjust="spacingAndGlyphs">00 00:03:26.351</text>
<text x="561.0" y="399.2" font-size="5.6" fill="#e8e8e8" textLength="27.5" lengthAdjust="spacingAndGlyphs" font-weight="bold">Real Time:</text>
<rect x="591.5" y="393.6" width="44.5" height="7" rx="1" fill="#7b7b7b"/>
<text x="592.9" y="399.2" font-size="5.6" fill="#3c3c3c" textLength="42.0" lengthAdjust="spacingAndGlyphs">00 00:04:32.558</text>
<text x="639.5" y="399.2" font-size="5.6" fill="#e8e8e8" textLength="28.0" lengthAdjust="spacingAndGlyphs" font-weight="bold">Iterations:</text>
<rect x="670.5" y="393.6" width="44.5" height="7" rx="1" fill="#7b7b7b"/>
<text x="671.9" y="399.2" font-size="5.6" fill="#3c3c3c" textLength="21.0" lengthAdjust="spacingAndGlyphs">208951</text>
<text x="718.0" y="399.2" font-size="5.6" fill="#e8e8e8" textLength="12.0" lengthAdjust="spacingAndGlyphs" font-weight="bold">FPS:</text>
</g>
</svg>
</body></html>
